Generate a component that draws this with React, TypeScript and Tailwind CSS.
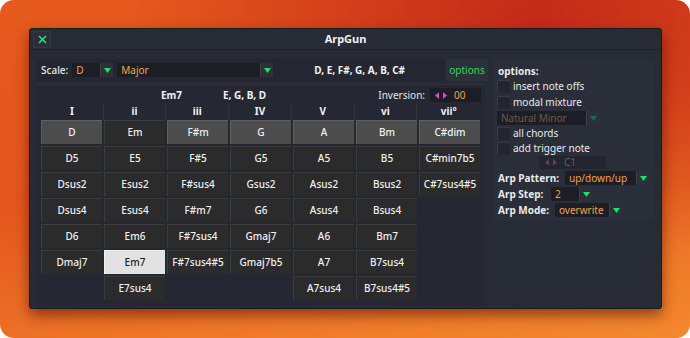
import React from "react";

type Kind = "top" | "sel" | "norm";

const columns: { label: string; cells: { name: string; kind: Kind }[] }[] = [
  { label: "I", cells: [["D", "top"], ["D5"], ["Dsus2"], ["Dsus4"], ["D6"], ["Dmaj7"]].map(c => ({ name: c[0], kind: (c[1] || "norm") as Kind })) },
  { label: "ii", cells: [["Em"], ["E5"], ["Esus2"], ["Esus4"], ["Em6"], ["Em7", "sel"], ["E7sus4"]].map(c => ({ name: c[0], kind: (c[1] || "norm") as Kind })) },
  { label: "iii", cells: [["F#m", "top"], ["F#5"], ["F#sus4"], ["F#m7"], ["F#7sus4"], ["F#7sus4#5"]].map(c => ({ name: c[0], kind: (c[1] || "norm") as Kind })) },
  { label: "IV", cells: [["G", "top"], ["G5"], ["Gsus2"], ["G6"], ["Gmaj7"], ["Gmaj7b5"]].map(c => ({ name: c[0], kind: (c[1] || "norm") as Kind })) },
  { label: "V", cells: [["A", "top"], ["A5"], ["Asus2"], ["Asus4"], ["A6"], ["A7"], ["A7sus4"]].map(c => ({ name: c[0], kind: (c[1] || "norm") as Kind })) },
  { label: "vi", cells: [["Bm", "top"], ["B5"], ["Bsus2"], ["Bsus4"], ["Bm7"], ["B7sus4"], ["B7sus4#5"]].map(c => ({ name: c[0], kind: (c[1] || "norm") as Kind })) },
  { label: "vii°", cells: [["C#dim", "top"], ["C#min7b5"], ["C#7sus4#5"]].map(c => ({ name: c[0], kind: (c[1] || "norm") as Kind })) },
];

const Arrow = ({ dim }: { dim?: boolean }) => (
  <svg width="7" height="5" viewBox="0 0 7 5">
    <polygon points="0,0 7,0 3.5,5" fill={dim ? "#1c6b40" : "#1ee06a"} />
  </svg>
);

const Dropdown = ({ value, w, dim }: { value: string; w: string; dim?: boolean }) => (
  <div className="flex h-[14px]">
    <div className={`${w} bg-[#1c1e26] pl-[4px] flex items-center ${dim ? "text-[#6e5a46]" : "text-[#f2a443]"}`}>{value}</div>
    <div className="w-[13px] bg-[#2c303b] border-l border-[#3a3f4b] flex items-center justify-center">
      <Arrow dim={dim} />
    </div>
  </div>
);

const Spin = ({ dim }: { dim?: boolean }) => (
  <svg width="12" height="7" viewBox="0 0 12 7">
    <polygon points="4,0 4,7 0,3.5" fill={dim ? "#6b3a63" : "#e444c4"} />
    <polygon points="8,0 8,7 12,3.5" fill={dim ? "#6b3a63" : "#e444c4"} />
  </svg>
);

const Check = ({ label }: { label: string }) => (
  <div className="flex items-center h-[13px] gap-[3px]">
    <div className="w-[13px] h-[13px] bg-[#23262f] border-t border-l border-[#363a46]" />
    <span className="text-[#e9eaee]">{label}</span>
  </div>
);

const Cell = ({ name, kind }: { name: string; kind: Kind }) => {
  const cls =
    kind === "top"
      ? "bg-[#4c4c4c] border-t border-l border-[#5f5f5f] text-[#f2f2f2]"
      : kind === "sel"
      ? "bg-[#e2e2e2] border-t border-l border-[#f2f2f2] text-[#1c1c1c]"
      : "bg-[#2b2b2b] border-t border-l border-[#3c3c3c] text-[#f0f0f0]";
  return (
    <div className={`h-[24px] w-[61px] flex items-center justify-center text-[10px] font-medium ${cls}`}>{name}</div>
  );
};

export default function App() {
  return (
    <div className="w-[690px] h-[338px] bg-white font-['Noto_Sans',sans-serif]">
      <div className="w-[690px] h-[338px] rounded-[14px] bg-[radial-gradient(ellipse_at_78%_5%,#c32a18_0%,rgba(200,50,25,0)_55%),linear-gradient(170deg,#e65a1e_0%,#e4561c_45%,#f3892e_100%)] pl-[29px] pt-[28px]">
        <div className="w-[633px] h-[281px] bg-[#272b36] border border-[#1a1c22] rounded-[3px] shadow-[0_6px_14px_rgba(60,10,0,0.55)] flex flex-col">
          {/* title bar */}
          <div className="h-[21px] relative flex items-center border-b border-[#20232b]">
            <div className="ml-[3px] w-[18px] h-[17px] bg-[#2a2e39] border border-[#353a46] flex items-center justify-center">
              <svg width="9" height="9" viewBox="0 0 9 9">
                <path d="M1 1 L8 8 M8 1 L1 8" stroke="#2fe07a" strokeWidth="1.6" />
              </svg>
            </div>
            <div className="flex-1 text-center text-[11px] font-bold text-[#f1f2f5] pr-[21px]">ArpGun</div>
          </div>

          {/* body */}
          <div className="flex pl-[6px] pt-[9px] gap-[5px]">
            {/* left */}
            <div className="w-[452px] flex flex-col gap-[3px]">
              <div className="h-[22px] flex items-center bg-[#242731] text-[10px]">
                <span className="ml-[5px] text-[#e6e7eb] font-medium">Scale:</span>
                <div className="ml-[4px]"><Dropdown value="D" w="w-[28px]" /></div>
                <div className="ml-[4px]"><Dropdown value="Major" w="w-[143px]" /></div>
                <div className="flex-1 text-center font-bold text-[#f1f2f5]">D, E, F#, G, A, B, C#</div>
                <div className="w-[42px] h-[22px] bg-[#2c303c] flex items-center justify-center text-[#28dc55]">options</div>
              </div>
              <div className="w-[449px] h-[222px] bg-[#252833] border-t border-[#2e323d] flex flex-col">
                <div className="h-[16px] mt-[2px] flex items-center text-[10px]">
                  <div className="w-[146px] text-right font-bold text-[#f1f2f5]">Em7</div>
                  <div className="ml-[41px] font-bold text-[#f1f2f5]">E, G, B, D</div>
                  <div className="flex-1" />
                  <span className="text-[#e6e7eb] mr-[5px]">Inversion:</span>
                  <div className="w-[51px] h-[14px] bg-[#1c1e26] flex items-center gap-[7px] pl-[5px] mr-[4px]">
                    <Spin />
                    <span className="text-[#f2a443]">00</span>
                  </div>
                </div>
                <div className="flex h-[17px] px-[5px] text-[10px] font-bold text-[#f1f2f5]">
                  {columns.map((c, i) => (
                    <div key={c.label} className={`w-[63px] flex items-center justify-center ${i < 6 ? "border-r border-[#30343f]" : ""}`}>{c.label}</div>
                  ))}
                </div>
                <div className="flex gap-[2px] px-[5px]">
                  {columns.map(c => (
                    <div key={c.label} className="flex flex-col gap-[2px]">
                      {c.cells.map(cell => <Cell key={cell.name} {...cell} />)}
                    </div>
                  ))}
                </div>
              </div>
            </div>

            {/* options */}
            <div className="w-[161px] h-[162px] bg-[#2a2e39] pl-[4px] pt-[5px] flex flex-col text-[10px] text-[#e9eaee]">
              <div className="font-bold h-[14px] flex items-center ml-[1px]">options:</div>
              <div className="mt-[2px] flex flex-col gap-[3px]">
                <Check label="insert note offs" />
                <Check label="modal mixture" />
              </div>
              <div className="mt-[2px]"><Dropdown value="Natural Minor" w="w-[89px]" dim /></div>
              <div className="mt-[2px] flex flex-col gap-[2px]">
                <Check label="all chords" />
                <Check label="add trigger note" />
              </div>
              <div className="ml-[42px] mt-[1px] w-[67px] h-[13px] bg-[#23262f] flex items-center gap-[7px] pl-[6px]">
                <Spin dim />
                <span className="text-[#6e5a5e]">C1</span>
              </div>
              <div className="mt-[2px] flex flex-col gap-[2px] font-bold">
                <div className="flex items-center h-[14px]">
                  <span className="w-[67px] ml-[1px]">Arp Pattern:</span>
                  <div className="font-normal"><Dropdown value="up/down/up" w="w-[71px]" /></div>
                </div>
                <div className="flex items-center h-[14px]">
                  <span className="w-[53px] ml-[1px]">Arp Step:</span>
                  <div className="font-normal"><Dropdown value="2" w="w-[28px]" /></div>
                </div>
                <div className="flex items-center h-[14px]">
                  <span className="w-[57px] ml-[1px]">Arp Mode:</span>
                  <div className="font-normal"><Dropdown value="overwrite" w="w-[54px]" /></div>
                </div>
              </div>
            </div>
          </div>
        </div>
      </div>
    </div>
  );
}
